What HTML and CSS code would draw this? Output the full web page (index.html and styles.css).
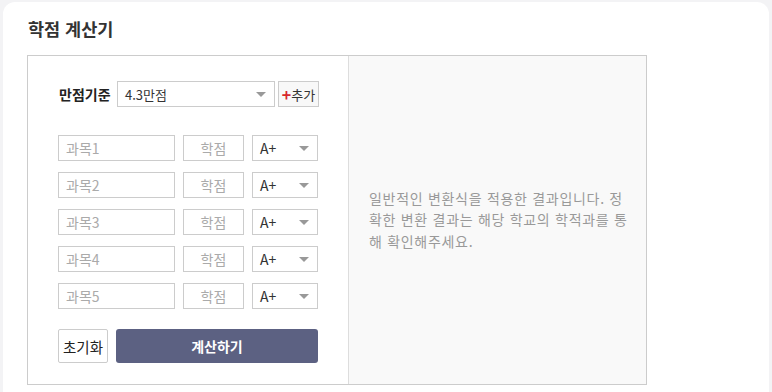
FILE: index.html
```html
<!DOCTYPE html>
<html lang="ko">
<head>
<meta charset="utf-8">
<title>학점 계산기</title>
<link rel="stylesheet" href="styles.css">
</head>
<body>
<div class="card">
  <h2 class="title">학점 계산기</h2>
  <div class="calc">
    <div class="form">
      <div class="std-row">
        <span class="std-label">만점기준</span>
        <div class="select std-select"><span>4.3만점</span><i class="arrow"></i></div>
        <button class="add-btn"><span class="plus">+</span>추가</button>
      </div>
      <div class="rows">
        <div class="row">
          <input class="subject" placeholder="과목1">
          <input class="credit" placeholder="학점">
          <div class="select grade"><span>A+</span><i class="arrow"></i></div>
        </div>
        <div class="row">
          <input class="subject" placeholder="과목2">
          <input class="credit" placeholder="학점">
          <div class="select grade"><span>A+</span><i class="arrow"></i></div>
        </div>
        <div class="row">
          <input class="subject" placeholder="과목3">
          <input class="credit" placeholder="학점">
          <div class="select grade"><span>A+</span><i class="arrow"></i></div>
        </div>
        <div class="row">
          <input class="subject" placeholder="과목4">
          <input class="credit" placeholder="학점">
          <div class="select grade"><span>A+</span><i class="arrow"></i></div>
        </div>
        <div class="row">
          <input class="subject" placeholder="과목5">
          <input class="credit" placeholder="학점">
          <div class="select grade"><span>A+</span><i class="arrow"></i></div>
        </div>
      </div>
      <div class="actions">
        <button class="reset">초기화</button>
        <button class="submit">계산하기</button>
      </div>
    </div>
    <div class="result">
      <p class="notice">일반적인 변환식을 적용한 결과입니다. 정<br>확한 변환 결과는 해당 학교의 학적과를 통<br>해 확인해주세요.</p>
    </div>
  </div>
</div>
</body>
</html>
```

FILE: styles.css
```css
* { box-sizing: border-box; }
html, body { margin: 0; padding: 0; }
body {
  background: #f3f3f5;
  font-family: "Noto Sans CJK KR", "Noto Sans", sans-serif;
  color: #333;
  height: 392px;
  overflow: hidden;
}
.card {
  margin: 2px 3px 0 3px;
  background: #fff;
  border-radius: 12px 12px 0 0;
  padding: 15px 0 0 24px;
  height: 400px;
}
.title {
  margin: 0 0 14px 1px;
  font-size: 17.5px;
  font-weight: 700;
  line-height: 24px;
  color: #333;
}
.calc {
  display: flex;
  width: 620px;
  height: 330px;
  border: 1px solid #ccc;
}
.form {
  flex: 0 0 321px;
  width: 321px;
  border-right: 1px solid #ddd;
  padding: 25px 0 0 30px;
}
.std-row {
  display: flex;
  align-items: center;
  height: 26px;
}
.std-label {
  font-size: 14px;
  font-weight: 700;
  color: #222;
  margin-left: 1px;
  width: 58px;
}
.select {
  position: relative;
  display: flex;
  align-items: center;
  height: 26px;
  border: 1px solid #ccc;
  background: #fff;
  font-size: 13px;
  color: #333;
  padding-left: 7px;
}
.arrow {
  position: absolute;
  right: 8px;
  top: 10px;
  width: 0;
  height: 0;
  border-left: 5px solid transparent;
  border-right: 5px solid transparent;
  border-top: 5px solid #999;
}
.std-select { width: 158px; }
.add-btn {
  margin-left: 3px;
  width: 41px;
  height: 26px;
  border: 1px solid #ccc;
  background: #f8f8f8;
  font-family: inherit;
  font-size: 13px;
  color: #333;
  padding: 0;
  display: flex;
  align-items: center;
  justify-content: center;
}
.plus { color: #d7262b; font-weight: 700; font-size: 16px; line-height: 1; margin-right: 0; }
.rows {
  margin-top: 28px;
  display: flex;
  flex-direction: column;
  gap: 11px;
}
.row {
  display: flex;
  gap: 8px;
  height: 26px;
}
input {
  height: 26px;
  border: 1px solid #ccc;
  font-family: inherit;
  font-size: 14px;
  color: #333;
  padding: 0 7px;
  margin: 0;
  outline: none;
  background: #fff;
}
input::placeholder { color: #aaa; }
.subject { width: 117px; }
.credit { width: 61px; text-align: center; }
.grade { width: 66px; font-size: 14px; }
.actions {
  margin-top: 20px;
  display: flex;
  gap: 8px;
}
.reset {
  width: 50px;
  height: 34px;
  border: 1px solid #ccc;
  border-radius: 2px;
  background: #fff;
  font-family: inherit;
  font-size: 14.5px;
  color: #222;
  padding: 0;
}
.submit {
  width: 202px;
  height: 34px;
  border: none;
  border-radius: 3px;
  background: #5c6182;
  color: #fff;
  font-family: inherit;
  font-size: 14px;
  font-weight: 700;
  padding: 0;
}
.result {
  flex: 1 1 auto;
  min-width: 0;
  background: #f9f9f9;
  display: flex;
  align-items: center;
  padding: 0 0 0 20px;
}
.notice {
  margin: 0;
  font-size: 14px;
  letter-spacing: 0.7px;
  line-height: 21.5px;
  color: #999;
  white-space: nowrap;
}
```
